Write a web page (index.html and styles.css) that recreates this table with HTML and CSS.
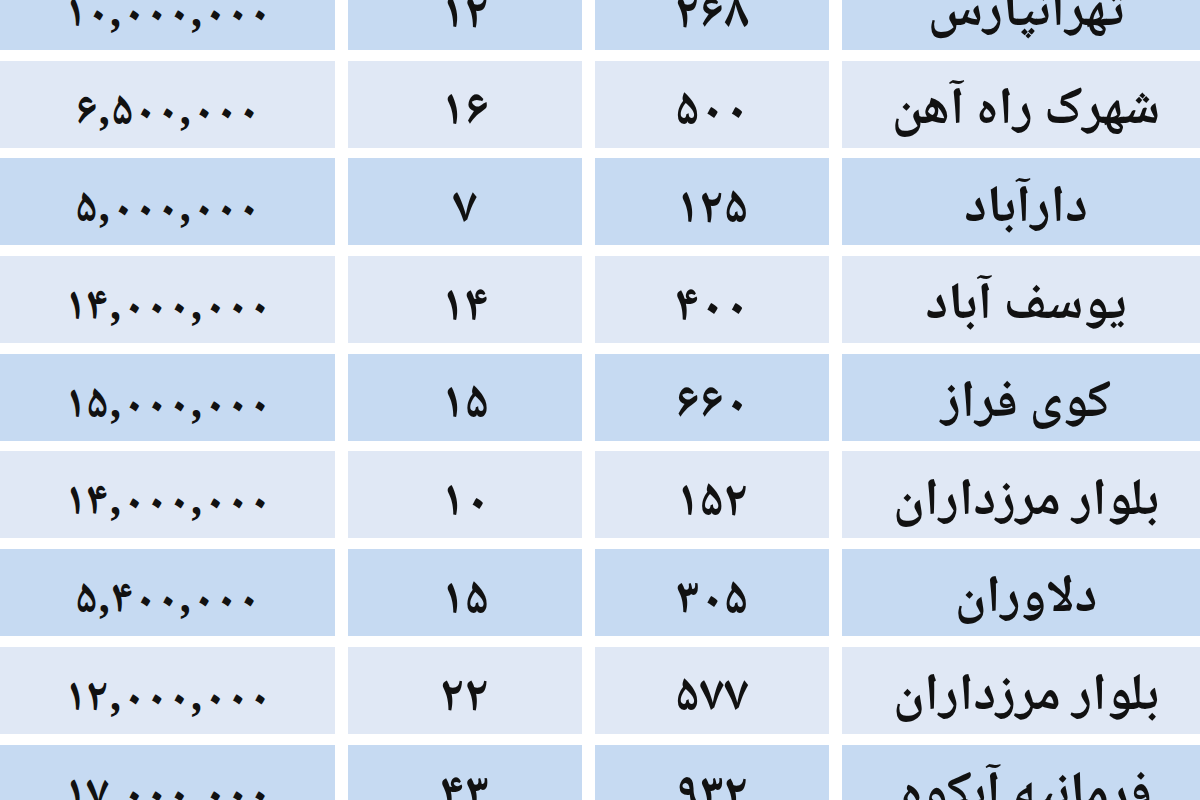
FILE: index.html
```html
<!DOCTYPE html>
<html lang="fa">
<head>
<meta charset="utf-8">
<title>جدول قیمت</title>
<link rel="stylesheet" href="styles.css">
</head>
<body>
<div class="table">
  <div class="row dark"><div class="cell c1">۱۰,۰۰۰,۰۰۰</div><div class="cell c2">۱۲</div><div class="cell c3">۲۶۸</div><div class="cell c4">تهرانپارس</div></div>
  <div class="row light"><div class="cell c1">۶,۵۰۰,۰۰۰</div><div class="cell c2">۱۶</div><div class="cell c3">۵۰۰</div><div class="cell c4">شهرک راه آهن</div></div>
  <div class="row dark"><div class="cell c1">۵,۰۰۰,۰۰۰</div><div class="cell c2">۷</div><div class="cell c3">۱۲۵</div><div class="cell c4">دارآباد</div></div>
  <div class="row light"><div class="cell c1">۱۴,۰۰۰,۰۰۰</div><div class="cell c2">۱۴</div><div class="cell c3">۴۰۰</div><div class="cell c4">یوسف آباد</div></div>
  <div class="row dark"><div class="cell c1">۱۵,۰۰۰,۰۰۰</div><div class="cell c2">۱۵</div><div class="cell c3">۶۶۰</div><div class="cell c4">کوی فراز</div></div>
  <div class="row light"><div class="cell c1">۱۴,۰۰۰,۰۰۰</div><div class="cell c2">۱۰</div><div class="cell c3">۱۵۲</div><div class="cell c4">بلوار مرزداران</div></div>
  <div class="row dark"><div class="cell c1">۵,۴۰۰,۰۰۰</div><div class="cell c2">۱۵</div><div class="cell c3">۳۰۵</div><div class="cell c4">دلاوران</div></div>
  <div class="row light"><div class="cell c1">۱۲,۰۰۰,۰۰۰</div><div class="cell c2">۲۲</div><div class="cell c3">۵۷۷</div><div class="cell c4">بلوار مرزداران</div></div>
  <div class="row dark"><div class="cell c1">۱۷,۰۰۰,۰۰۰</div><div class="cell c2">۴۳</div><div class="cell c3">۹۳۲</div><div class="cell c4">فرمانیه آبکوه</div></div>
</div>
</body>
</html>
```

FILE: styles.css
```css
html, body {
  margin: 0;
  padding: 0;
  background: #ffffff;
  overflow: hidden;
}

body {
  width: 1200px;
  height: 800px;
  font-family: "Noto Naskh Arabic", "DejaVu Sans", sans-serif;
  font-weight: bold;
  color: #111111;
}

.table {
  display: flex;
  flex-direction: column;
  gap: 10.7px;
  margin-top: -37px;
  width: 1210px;
}

.row {
  display: grid;
  grid-template-columns: 335px 234px 234px 368px;
  column-gap: 13px;
  height: 87px;
}

.cell {
  display: flex;
  align-items: center;
  justify-content: center;
  font-size: 50px;
  line-height: 1.2;
  padding-top: 20px;
  box-sizing: border-box;
  direction: rtl;
  white-space: nowrap;
}

.c1 {
  direction: ltr;
  font-size: 46px;
}

.c4 {
  font-size: 52px;
  padding-top: 16px;
}

.dark .cell {
  background: #c6daf2;
}

.light .cell {
  background: #e0e8f5;
}
```
